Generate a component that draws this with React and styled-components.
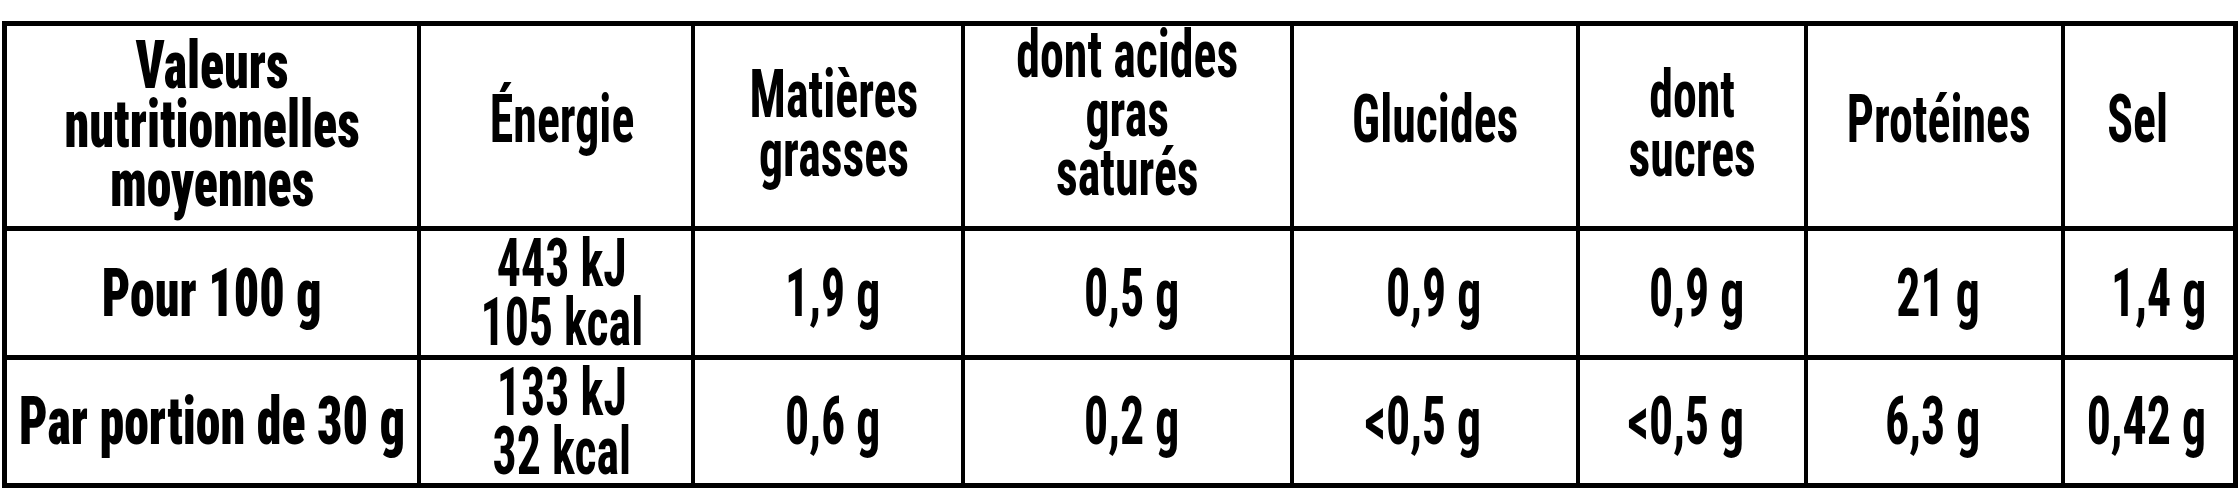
import React from 'react';
import styled, { createGlobalStyle } from 'styled-components';

const Global = createGlobalStyle`
  body {
    margin: 0;
    background: #fff;
  }
`;

const Table = styled.div`
  display: grid;
  grid-template-columns: 410px 270px 266px 325px 282px 224px 253px 168px;
  grid-template-rows: 200px 124px 123px;
  gap: 5px 4px;
  padding: 5px;
  width: max-content;
  margin: 21px 0 0 2px;
  background: #000;
`;

const Cell = styled.div`
  display: flex;
  align-items: center;
  justify-content: ${(p) => (p.$right ? 'flex-end' : 'center')};
  min-width: 0;
  padding: 0 ${(p) => p.$pr || 0}px ${(p) => p.$pb || 0}px ${(p) => p.$pl || 0}px;
  background: #fff;
`;

const Text = styled.span`
  display: block;
  flex-shrink: 0;
  white-space: nowrap;
  text-align: center;
  color: #000;
  font-family: Roboto, 'Liberation Sans', sans-serif;
  font-stretch: 75%;
  font-size: 67px;
  line-height: 59px;
  font-weight: ${(p) => (p.$heavy ? 900 : 700)};
  transform: scaleX(${(p) => (p.$heavy ? 0.745 : 0.715)});
  transform-origin: ${(p) => (p.$right ? 'right' : 'center')} center;
`;

const header = [
  { lines: ['Valeurs', 'nutritionnelles', 'moyennes'], heavy: true, pb: 3 },
  { lines: ['Énergie'], pl: 12, pb: 14 },
  { lines: ['Matières', 'grasses'], pl: 12, pb: 4 },
  { lines: ['dont acides', 'gras', 'saturés'], pb: 26 },
  { lines: ['Glucides'], pb: 14 },
  { lines: ['dont', 'sucres'], pb: 4 },
  { lines: ['Protéines'], pl: 8, pb: 14 },
  { lines: ['Sel'], pr: 23, pb: 14 },
];

const rows = [
  {
    label: 'Pour 100 g',
    energy: ['443 kJ', '105 kcal'],
    values: ['1,9 g', '0,5 g', '0,9 g', '0,9 g', '21 g', '1,4 g'],
  },
  {
    label: 'Par portion de 30 g',
    energy: ['133 kJ', '32 kcal'],
    values: ['0,6 g', '0,2 g', '<0,5 g', '<0,5 g', '6,3 g', '0,42 g'],
  },
];

// right padding of each value column, the figures sit flush right
const valuePad = [81, 111, 95, 60, 81, 27];

const Lines = ({ lines, heavy, right }) => (
  <Text $heavy={heavy} $right={right}>
    {lines.map((l, i) => (
      <React.Fragment key={i}>
        {i > 0 && <br />}
        {l}
      </React.Fragment>
    ))}
  </Text>
);

export default function App() {
  return (
    <>
      <Global />
      <Table>
        {header.map((h, i) => (
          <Cell key={i} $pl={h.pl} $pr={h.pr} $pb={h.pb}>
            <Lines lines={h.lines} heavy={h.heavy} />
          </Cell>
        ))}
        {rows.map((r) => (
          <React.Fragment key={r.label}>
            <Cell>
              <Lines lines={[r.label]} heavy />
            </Cell>
            <Cell $pl={12}>
              <Lines lines={r.energy} />
            </Cell>
            {r.values.map((v, i) => (
              <Cell key={i} $right $pr={valuePad[i]}>
                <Lines lines={[v]} right />
              </Cell>
            ))}
          </React.Fragment>
        ))}
      </Table>
    </>
  );
}
